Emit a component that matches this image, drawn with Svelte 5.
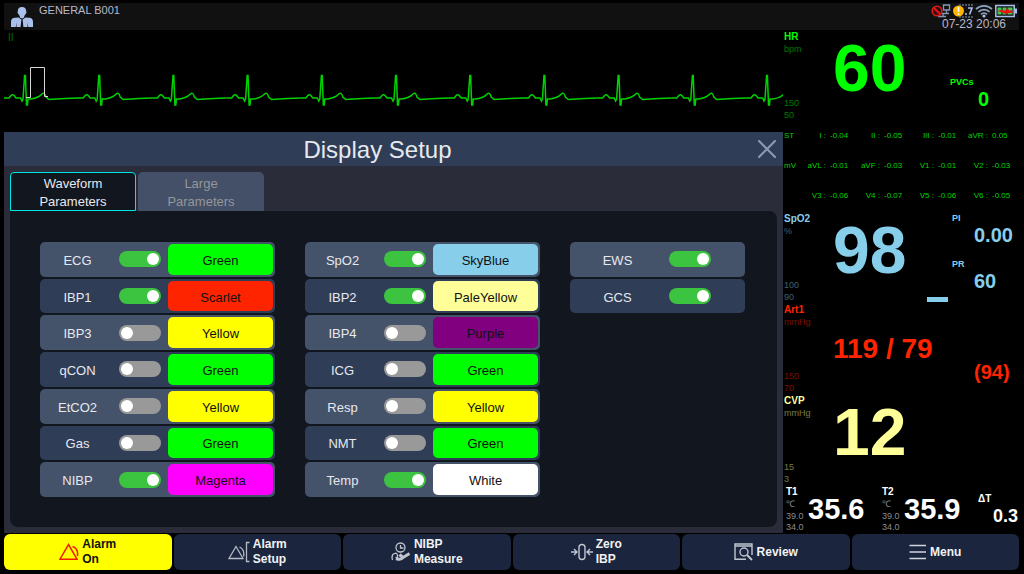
<script lang="ts">
  type Channel = { name: string; on: boolean; color?: string; fill?: string };

  let groups = $state<Channel[][]>([
    [
      { name: 'ECG', on: true, color: 'Green', fill: '#00ff00' },
      { name: 'IBP1', on: true, color: 'Scarlet', fill: '#ff2400' },
      { name: 'IBP3', on: false, color: 'Yellow', fill: '#ffff00' },
      { name: 'qCON', on: false, color: 'Green', fill: '#00ff00' },
      { name: 'EtCO2', on: false, color: 'Yellow', fill: '#ffff00' },
      { name: 'Gas', on: false, color: 'Green', fill: '#00ff00' },
      { name: 'NIBP', on: true, color: 'Magenta', fill: '#ff00ff' }
    ],
    [
      { name: 'SpO2', on: true, color: 'SkyBlue', fill: '#87ceeb' },
      { name: 'IBP2', on: true, color: 'PaleYellow', fill: '#ffff99' },
      { name: 'IBP4', on: false, color: 'Purple', fill: '#800080' },
      { name: 'ICG', on: false, color: 'Green', fill: '#00ff00' },
      { name: 'Resp', on: false, color: 'Yellow', fill: '#ffff00' },
      { name: 'NMT', on: false, color: 'Green', fill: '#00ff00' },
      { name: 'Temp', on: true, color: 'White', fill: '#ffffff' }
    ],
    [
      { name: 'EWS', on: true },
      { name: 'GCS', on: true }
    ]
  ]);

  const stRows = [
    { head: 'ST', leads: [['I', '-0.04'], ['II', '-0.05'], ['III', '-0.01'], ['aVR', '0.05']] },
    { head: 'mV', leads: [['aVL', '-0.01'], ['aVF', '-0.03'], ['V1', '-0.01'], ['V2', '-0.03']] },
    { head: '', leads: [['V3', '-0.06'], ['V4', '-0.07'], ['V5', '-0.06'], ['V6', '-0.05']] }
  ];

  const temps = [
    { name: 'T1', value: '35.6' },
    { name: 'T2', value: '35.9' }
  ];

  const actions = [
    { icon: 'alarm', lines: ['Alarm', 'On'] },
    { icon: 'setup', lines: ['Alarm', 'Setup'] },
    { icon: 'nibp', lines: ['NIBP', 'Measure'] },
    { icon: 'zero', lines: ['Zero', 'IBP'] },
    { icon: 'review', lines: ['Review'] },
    { icon: 'menu', lines: ['Menu'] }
  ];

  const beats = Array.from({ length: 11 }, (_, i) => 21 + i * 74.2);

  let tab = $state('Waveform');
  let open = $state(true);
</script>

{#snippet limits(name: string, unit: string, high: string, low: string)}
  <div class="scale">
    <h2>{name}</h2>
    <span>{unit}</span>
    <span class="high">{high}</span>
    <span>{low}</span>
  </div>
{/snippet}

<div class="monitor">
  <header>
    <div class="patient">
      <svg width="22" height="20" viewBox="0 0 22 20" fill="#a9c0ea">
        <path d="M11 0c3 0 4.400 2 4.200 4.600c.6.3.3 1.800-.4 2c-.4 1.300-1 2-1.600 2.500v1.500l-2.200 1l-2.200-1v-1.500c-.6-.5-1.200-1.200-1.600-2.500c-.7-.2-1-1.700-.4-2C6.600 2 8 0 11 0z" />
        <path d="M7.500 10.500L10.400 12.500L9.600 20H5.500V15.500L4.800 20H0V15C0 12 1.500 11 4 10.800zM14.500 10.500L11.600 12.500L12.400 20H16.500V15.500L17.200 20H22V15C22 12 20.500 11 18 10.800z" />
      </svg>
      <span>GENERAL B001</span>
    </div>
    <div class="status">
      <div class="icons">
        <svg width="20" height="14" viewBox="0 0 20 14" fill="none">
          <path d="M12.500 1h6v5h-6zM15.500 6v3M11 9.500h7M7 12.500h8M12 9v4" stroke="#8496b0" stroke-width="1.300" />
          <circle cx="6" cy="7" r="4.800" fill="#3a0a0a" stroke="#e01818" stroke-width="1.600" />
          <path d="M2.700 3.700L9.300 10.300" stroke="#e01818" stroke-width="2" />
        </svg>
        <svg width="20" height="14" viewBox="0 0 20 14" fill="none">
          <path d="M6 1h14M6 13h14" stroke="#8496b0" stroke-dasharray="2 1" />
          <path d="M12 10h2M15 4h4l-2.500 6.500" stroke="#a9c0ea" stroke-width="1.600" />
          <circle cx="5.500" cy="7" r="5.500" fill="#ffb400" />
          <path d="M5.500 3v5M5.500 9.300v1.600" stroke="#fff" stroke-width="1.600" />
        </svg>
        <svg width="18" height="14" viewBox="0 0 18 14" fill="none" stroke="#8fa5c6" stroke-width="1.700">
          <path d="M1 5.200c4.500-4.500 11.500-4.500 16 0M3.500 7.900c3-3.100 8-3.100 11 0M6 10.300c1.700-1.700 4.300-1.700 6 0" />
          <circle cx="9" cy="12" r="1.600" fill="#a9c0ea" stroke="none" />
        </svg>
        <svg width="22" height="14" viewBox="0 0 22 14">
          <path d="M.8 1.500h18.400v11H.8z" fill="none" stroke="#a9c0ea" stroke-width="1.500" />
          <path d="M20 4.500h2v5h-2z" fill="#a9c0ea" />
          <path d="M2.500 3.500h4v7h-4zM7.500 3.500h4v7h-4zM12.500 3.500h5v7h-5z" fill="#45c853" />
          <path d="M2.500 7l5-1.500v1h3L12.500 3.500l1.500 3h3.500v2.500H14l-3 1l-3-1.200z" fill="#e81414" />
        </svg>
      </div>
      <time>07-23 20:06</time>
    </div>
  </header>

  <main>
    <div class="left">
      <section class="wave">
        <span>II</span>
        <svg viewBox="0 0 779 101" preserveAspectRatio="none" fill="none">
          {#each beats as x}
            <path
              transform="translate({x} 0)"
              d="M-21.200 67H-16L-14 64.500Q-12.500 63-11 64.500L-9 67H-4.500L-3 70L-2 68L-.4 44.500H.4L1.500 74H2.400L3 68H6Q13 67 17 63Q19.500 60.500 21 66L24 68.500L40 67.500L53 67"
              stroke="#00d200"
              stroke-width="1.500"
            />
          {/each}
          <path d="M22 66.500H26.500V36.500H40.500V65.500H44" stroke="#d8d8d8" />
        </svg>
      </section>

      {#if open}
        <section class="dialog" role="dialog" aria-labelledby="title">
          <div class="bar">
            <h1 id="title">Display Setup</h1>
            <button class="close" aria-label="Close" onclick={() => (open = false)}>
              <svg width="18" height="18" viewBox="0 0 18 18">
                <path d="M1 1L17 17M17 1L1 17" stroke="#8a99b3" stroke-width="2.200" stroke-linecap="round" />
              </svg>
            </button>
          </div>
          <div class="body">
            <div class="tabs" role="tablist">
              {#each ['Waveform', 'Large'] as name}
                <button role="tab" aria-selected={tab === name} class:active={tab === name} onclick={() => (tab = name)}>
                  {name}<br />Parameters
                </button>
              {/each}
            </div>
            <div class="panel">
              {#each groups as group, g}
                <div class="group" class:plain={g === 2}>
                  {#each group as channel}
                    <div class="row">
                      <label for={channel.name}>{channel.name}</label>
                      <input id={channel.name} type="checkbox" bind:checked={channel.on} />
                      {#if channel.color}
                        <button class="swatch" style="background: {channel.fill}">{channel.color}</button>
                      {/if}
                    </div>
                  {/each}
                </div>
              {/each}
            </div>
          </div>
        </section>
      {/if}
    </div>

    <aside>
      <section class="vital green">
        {@render limits('HR', 'bpm', '150', '50')}
        <strong>60</strong>
        <div class="side">
          <div class="reading count"><span>PVCs</span><b>0</b></div>
        </div>
      </section>

      <table>
        <tbody>
          {#each stRows as row}
            <tr>
              <th>{row.head}</th>
              {#each row.leads as [lead, value]}
                <td class="lead">{lead} :</td>
                <td>{value}</td>
              {/each}
            </tr>
          {/each}
        </tbody>
      </table>

      <section class="vital sky">
        {@render limits('SpO2', '%', '100', '90')}
        <strong>98</strong>
        <div class="pulse"></div>
        <div class="side">
          <div class="reading"><span>PI</span><b>0.00</b></div>
          <div class="reading"><span>PR</span><b>60</b></div>
        </div>
      </section>

      <section class="vital red">
        {@render limits('Art1', 'mmHg', '150', '70')}
        <strong class="pair">119 / 79</strong>
        <div class="side">
          <div class="reading"><b>(94)</b></div>
        </div>
      </section>

      <section class="vital pale">
        {@render limits('CVP', 'mmHg', '15', '3')}
        <strong>12</strong>
      </section>

      <section class="temps">
        {#each temps as t}
          <div class="temp">
            <div class="range">
              <h2>{t.name}</h2>
              <span class="unit">℃</span>
              <span>39.0</span>
              <span>34.0</span>
            </div>
            <strong>{t.value}</strong>
          </div>
        {/each}
        <div class="delta"><h2>ΔT</h2><b>0.3</b></div>
      </section>
    </aside>
  </main>

  <footer>
    {#each actions as action}
      <button class:alert={action.icon === 'alarm'}>
        {#if action.icon === 'alarm'}
          <svg width="20" height="18" viewBox="0 0 20 18" fill="none" stroke="#f01e00" stroke-width="1.500">
            <path d="M9.500 1.500L18 16.200H1zM13.500 3.500Q19.500 5.500 18.500 13" />
          </svg>
        {:else if action.icon === 'setup'}
          <svg width="22" height="22" viewBox="0 0 22 22" fill="none" stroke="#b4bac6" stroke-width="1.300">
            <path d="M8 5.500L15 17.500H1zM11.500 6Q17 8.500 15.500 15.500M21.500 1.500H18.500V20.500H21.500" />
          </svg>
        {:else if action.icon === 'nibp'}
          <svg width="20" height="20" viewBox="0 0 20 20" fill="none" stroke="#c0c5cf" stroke-width="1.300">
            <circle cx="9.500" cy="5.500" r="4.500" />
            <path d="M9.500 3V6H12.500M1.500 18Q0 12.500 3.500 11.500Q6 10.500 6.500 13.500Q7 16 4.500 15.500" />
            <path d="M5 16.500Q10 18.500 12 15.500L18.500 11.500M8.500 12.500L12 15.500" stroke-width="3" />
          </svg>
        {:else if action.icon === 'zero'}
          <svg width="22" height="18" viewBox="0 0 22 18" fill="none" stroke="#c0c5cf" stroke-width="1.400">
            <rect x="8" y="1.500" width="6" height="15" rx="3" />
            <path d="M0 9H5.500M3 6L6 9L3 12M22 9H16.500M19 6L16 9L19 12" />
          </svg>
        {:else if action.icon === 'review'}
          <svg width="20" height="18" viewBox="0 0 20 18" fill="none" stroke="#c0c5cf" stroke-width="1.400">
            <path d="M12 16.300H1V1H18V12M1 3H18" />
            <circle cx="10" cy="9" r="4" />
            <path d="M13 12L18 17" stroke-width="2" />
          </svg>
        {:else}
          <svg width="18" height="16" viewBox="0 0 18 16" stroke="#d0d4dc" stroke-width="1.500">
            <path d="M.5 1.500H17M.5 8H17M.5 14.500H17" />
          </svg>
        {/if}
        <span>
          {#each action.lines as line}
            <span class="line">{line}</span>
          {/each}
        </span>
      </button>
    {/each}
  </footer>
</div>

<style>
  :global(body) {
    background: #000;
  }
  .monitor {
    box-sizing: border-box;
    min-height: 100vh;
    padding: 3px 5px 4px 4px;
    display: grid;
    grid-template-rows: 27px 1fr 36px;
    gap: 1px;
    background: #000;
    color: #fff;
    font-family: "Liberation Sans", Arial, sans-serif;
  }
  h1, h2 {
    margin: 0;
  }
  svg {
    display: block;
    flex: none;
  }
  button {
    font-family: inherit;
    border: none;
    padding: 0;
    cursor: pointer;
  }

  header {
    display: flex;
    justify-content: space-between;
    background: #111;
    color: #b8b8c8;
  }
  .patient {
    display: flex;
    gap: 6px;
    padding: 4px 0 0 7px;
    font-size: 11px;
  }
  .patient span {
    line-height: 13px;
    margin-top: -3px;
  }
  .status {
    display: flex;
    flex-direction: column;
    align-items: center;
    padding-right: 2px;
    font-size: 12px;
    line-height: 12px;
  }
  .icons {
    display: flex;
    gap: 2px;
    padding-top: 1px;
  }

  main {
    display: grid;
    grid-template-columns: 1fr 235px;
    gap: 1px;
  }
  .left {
    display: flex;
    flex-direction: column;
  }
  .wave {
    position: relative;
    height: 101px;
  }
  .wave svg {
    width: 100%;
    height: 100%;
  }
  .wave span {
    position: absolute;
    top: 1px;
    left: 4px;
    font-size: 10px;
    line-height: 12px;
    color: #006e00;
  }

  .dialog {
    flex: 1;
    display: flex;
    flex-direction: column;
    background: #2a2d39;
  }
  .bar {
    display: grid;
    grid-template-columns: 1fr 32px;
    align-items: center;
    height: 34px;
    background: #2f3d57;
  }
  h1 {
    padding-top: 2px;
    font-size: 24px;
    font-weight: 400;
    line-height: 32px;
    text-align: center;
    color: #e6e9ee;
  }
  .close {
    background: none;
    display: grid;
    place-items: center;
    height: 34px;
  }
  .body {
    flex: 1;
    display: flex;
    flex-direction: column;
    padding: 6px;
  }
  .tabs {
    display: flex;
    gap: 2px;
  }
  .tabs button {
    box-sizing: border-box;
    width: 126px;
    height: 39px;
    padding-top: 2px;
    border-radius: 5px 5px 0 0;
    background: #435068;
    color: #959699;
    font-size: 13px;
    line-height: 18px;
  }
  .tabs .active {
    background: #12161f;
    border: 1px solid #00e6e6;
    border-radius: 4px 4px 0 0;
    color: #e6e9ee;
  }
  .panel {
    flex: 1;
    display: flex;
    gap: 30px;
    padding: 31px 30px 30px;
    border-radius: 0 8px 8px 8px;
    background: #12161f;
  }
  .group {
    display: grid;
    grid-template-rows: repeat(7, 1fr);
    gap: 2px;
    width: 235px;
  }
  .group.plain {
    width: 175px;
  }
  .row {
    box-sizing: border-box;
    display: flex;
    align-items: center;
    min-height: 34px;
    padding-right: 2px;
    border-radius: 5px;
    background: #2f3d57;
    font-size: 13px;
  }
  .row:nth-child(odd) {
    background: #44526a;
  }
  .row label {
    width: 75px;
    padding: 2px 4px 0 0;
    text-align: center;
    color: #e6e9ee;
  }
  .plain label {
    width: 95px;
  }
  .row input {
    appearance: none;
    margin: 0;
    width: 42px;
    height: 16px;
    padding: 2px;
    box-sizing: border-box;
    border-radius: 8px;
    background: #999;
    display: flex;
    cursor: pointer;
  }
  .row input::before {
    content: "";
    width: 12px;
    height: 12px;
    border-radius: 50%;
    background: #fff;
  }
  .row input:checked {
    background: #3cc440;
    justify-content: flex-end;
  }
  .swatch {
    flex: 1;
    align-self: stretch;
    margin: 2px 0 2px 7px;
    padding-top: 2px;
    border-radius: 5px;
    font-size: 13px;
    color: #111;
  }

  aside {
    display: grid;
    grid-template-rows: repeat(5, 90px) 1fr;
    gap: 1px;
  }
  .vital {
    display: grid;
    grid-template-columns: 49px 92px 25px 1fr;
  }
  h2 {
    font-size: 10px;
    line-height: 12px;
  }
  .scale {
    display: flex;
    flex-direction: column;
    font-size: 9px;
    line-height: 12px;
  }
  .scale span {
    opacity: 0.45;
  }
  .scale .high {
    margin-top: auto;
  }
  .vital strong {
    grid-column: 2 / 4;
    grid-row: 1;
    font-size: 66px;
    line-height: 74px;
    white-space: nowrap;
  }
  .vital .pair {
    font-size: 28px;
    line-height: 90px;
  }
  .pulse {
    grid-column: 3;
    grid-row: 1;
    align-self: end;
    width: 21px;
    height: 5px;
    margin: 0 0 1px 2px;
    background: #87ceeb;
  }
  .side {
    grid-column: 4;
    grid-row: 1;
    display: flex;
    flex-direction: column;
    justify-content: flex-end;
    gap: 13px;
    padding-bottom: 11px;
  }
  .reading {
    display: flex;
    flex-direction: column;
    padding-left: 2px;
    font-size: 9px;
    line-height: 11px;
    font-weight: 700;
  }
  .reading.count {
    padding-left: 0;
  }
  .reading b {
    padding-left: 22px;
    font-size: 20px;
    line-height: 22px;
  }
  .count b {
    padding-left: 28px;
  }
  .green { color: #00ff00; }
  .sky { color: #87ceeb; }
  .red { color: #ff2400; }
  .pale { color: #ffff99; }

  table {
    table-layout: fixed;
    width: 235px;
    border-collapse: collapse;
    font-size: 8px;
    color: #00d200;
  }
  tr {
    height: 30px;
  }
  th, td {
    width: 27px;
    padding: 0 0 3px;
    text-align: left;
    white-space: nowrap;
  }
  th {
    width: 19px;
    font-weight: 400;
  }
  td.lead {
    text-align: right;
    padding-right: 4px;
    width: 23px;
  }

  .temps {
    display: flex;
    padding-left: 2px;
  }
  .temp {
    display: flex;
    width: 96px;
  }
  .range {
    display: flex;
    flex-direction: column;
    width: 22px;
    font-size: 9px;
    line-height: 11px;
    color: #8c8c8c;
  }
  .range h2 {
    color: #fff;
  }
  .range .unit {
    line-height: 13px;
  }
  .temp strong {
    font-size: 29px;
    line-height: 47px;
  }
  .delta {
    display: flex;
    flex-direction: column;
    padding-top: 7px;
  }
  .delta b {
    padding-left: 15px;
    font-size: 18px;
    line-height: 22px;
  }

  footer {
    display: flex;
    gap: 2px;
  }
  footer button {
    flex: 1;
    display: flex;
    align-items: center;
    justify-content: center;
    gap: 3px;
    border-radius: 6px;
    background: #1b253d;
    color: #f0f2f5;
    font-size: 12px;
    font-weight: 700;
    line-height: 15px;
    text-align: left;
  }
  footer .alert {
    background: #ffff00;
    color: #111;
  }
  .line {
    display: block;
  }
</style>
